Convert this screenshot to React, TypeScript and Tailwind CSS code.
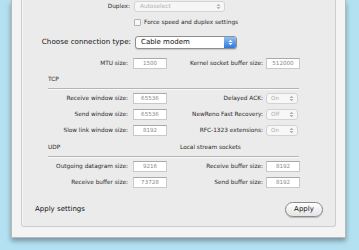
import type { ReactNode } from 'react'

const font = { fontFamily: '"DejaVu Sans", "Liberation Sans", sans-serif' }

function Arrows({ color }: { color: string }) {
  return (
    <svg width="5" height="7" viewBox="0 0 5 7" aria-hidden="true">
      <path d="M0.5 3 L2.5 0.8 L4.5 3 Z" fill={color} />
      <path d="M0.5 4 L2.5 6.2 L4.5 4 Z" fill={color} />
    </svg>
  )
}

function Field({ value }: { value: string }) {
  return (
    <div className="flex h-[11px] w-[34px] items-center justify-center border border-[#c9c9c9] border-t-[#a9a9a9] bg-white text-[5.6px] text-[#8a8a8a]">
      {value}
    </div>
  )
}

function MiniPopup({ value }: { value: string }) {
  return (
    <div className="flex h-[11px] w-[32px] items-center justify-between rounded-[3px] border border-[#d2d2d2] bg-[#f7f7f7] pr-[3px] pl-[4px] text-[5.6px] text-[#a8a8a8]">
      <span>{value}</span>
      <Arrows color="#b0b0b0" />
    </div>
  )
}

function Row({ label, control, rightLabel, rightControl }: {
  label: string
  control: ReactNode
  rightLabel?: string
  rightControl?: ReactNode
}) {
  return (
    <div className="flex h-[12px] items-center">
      <div className="w-[106px] text-right text-[5.8px] text-[#2a2a2a]">{label}</div>
      <div className="ml-[5px]">{control}</div>
      <div className="w-[96px] text-right text-[5.8px] text-[#2a2a2a]">{rightLabel}</div>
      <div className="ml-[3px]">{rightControl}</div>
    </div>
  )
}

export default function App() {
  return (
    <div className="h-[250px] w-[359px] overflow-hidden bg-[#b4e1f1]" style={font}>
      <div className="ml-[11px] h-[238px] w-[335px] border-x border-b border-[#b9b9b9] bg-[#f4f4f4] px-[9px] pb-[10px] shadow-[0_3px_5px_rgba(0,0,0,0.35)]">
        <div className="h-full rounded-b-[3px] border-x border-b border-[#cdcdcd] bg-[#ebebeb] shadow-[inset_1px_0_0_#f8f8f8]">
          {/* Duplex */}
          <div className="flex h-[12px] items-center">
            <div className="w-[108px] text-right text-[5.8px] text-[#2a2a2a]">Duplex:</div>
            <div className="ml-[4px] flex h-[11px] w-[91px] items-center justify-between rounded-[3px] border border-[#d4d4d4] bg-[#f6f6f6] pr-[3px] pl-[5px] text-[5.8px] text-[#b0b0b0]">
              <span>Autoselect</span>
              <Arrows color="#b4b4b4" />
            </div>
          </div>

          {/* Force checkbox */}
          <div className="mt-[4px] flex h-[12px] items-center pl-[112px]">
            <div className="h-[7px] w-[7px] rounded-[1px] border border-[#b3b3b3] bg-[#f8f8f8]" />
            <span className="ml-[3px] text-[5.8px] text-[#2a2a2a]">Force speed and duplex settings</span>
          </div>

          {/* Connection type */}
          <div className="mt-[7px] flex h-[14px] items-center">
            <div className="w-[109px] text-right text-[7.2px] text-[#111]">Choose connection type:</div>
            <div className="ml-[4px] flex h-[13px] w-[102px] items-center justify-between overflow-hidden rounded-[3px] border border-[#8e8e8e] bg-white shadow-[0_1px_1px_rgba(0,0,0,0.15)]">
              <span className="pl-[5px] text-[7px] text-[#111]">Cable modem</span>
              <div className="flex h-full w-[12px] items-center justify-center bg-gradient-to-b from-[#8fc0f5] to-[#2f76dc]">
                <Arrows color="#ffffff" />
              </div>
            </div>
          </div>

          {/* MTU */}
          <div className="mt-[8px]">
            <Row
              label="MTU size:"
              control={<Field value="1500" />}
              rightLabel="Kernel socket buffer size:"
              rightControl={<Field value="512000" />}
            />
          </div>

          {/* TCP */}
          <div className="mt-[5px] flex h-[10px] items-center pl-[26px] text-[5.8px] text-[#2a2a2a]">TCP</div>
          <div className="mt-[4px] ml-[26px] h-px w-[251px] bg-[#b4b4b4] shadow-[0_1px_0_#fafafa]" />
          <div className="mt-[3px] flex flex-col gap-[4px]">
            <Row
              label="Receive window size:"
              control={<Field value="65536" />}
              rightLabel="Delayed ACK:"
              rightControl={<MiniPopup value="On" />}
            />
            <Row
              label="Send window size:"
              control={<Field value="65536" />}
              rightLabel="NewReno Fast Recovery:"
              rightControl={<MiniPopup value="Off" />}
            />
            <Row
              label="Slow link window size:"
              control={<Field value="8192" />}
              rightLabel="RFC-1323 extensions:"
              rightControl={<MiniPopup value="On" />}
            />
          </div>

          {/* UDP / local */}
          <div className="mt-[6px] flex h-[10px] items-center text-[5.8px] text-[#2a2a2a]">
            <span className="w-[158px] pl-[26px]">UDP</span>
            <span>Local stream sockets</span>
          </div>
          <div className="mt-[4px] ml-[26px] h-px w-[251px] bg-[#b4b4b4] shadow-[0_1px_0_#fafafa]" />
          <div className="mt-[3px] flex flex-col gap-[4px]">
            <Row
              label="Outgoing datagram size:"
              control={<Field value="9216" />}
              rightLabel="Receive buffer size:"
              rightControl={<Field value="8192" />}
            />
            <Row
              label="Receive buffer size:"
              control={<Field value="73728" />}
              rightLabel="Send buffer size:"
              rightControl={<Field value="8192" />}
            />
          </div>

          {/* Apply */}
          <div className="mt-[13px] flex h-[16px] items-center justify-between pr-[12px] pl-[13px]">
            <span className="text-[7px] text-[#111]">Apply settings</span>
            <button
              type="button"
              className="flex h-[15px] w-[38px] items-center justify-center rounded-full border border-[#8a8a8a] bg-gradient-to-b from-white to-[#e4e4e4] text-[7px] text-[#111] shadow-[0_1px_1px_rgba(0,0,0,0.2)]"
            >
              Apply
            </button>
          </div>
        </div>
      </div>
    </div>
  )
}
